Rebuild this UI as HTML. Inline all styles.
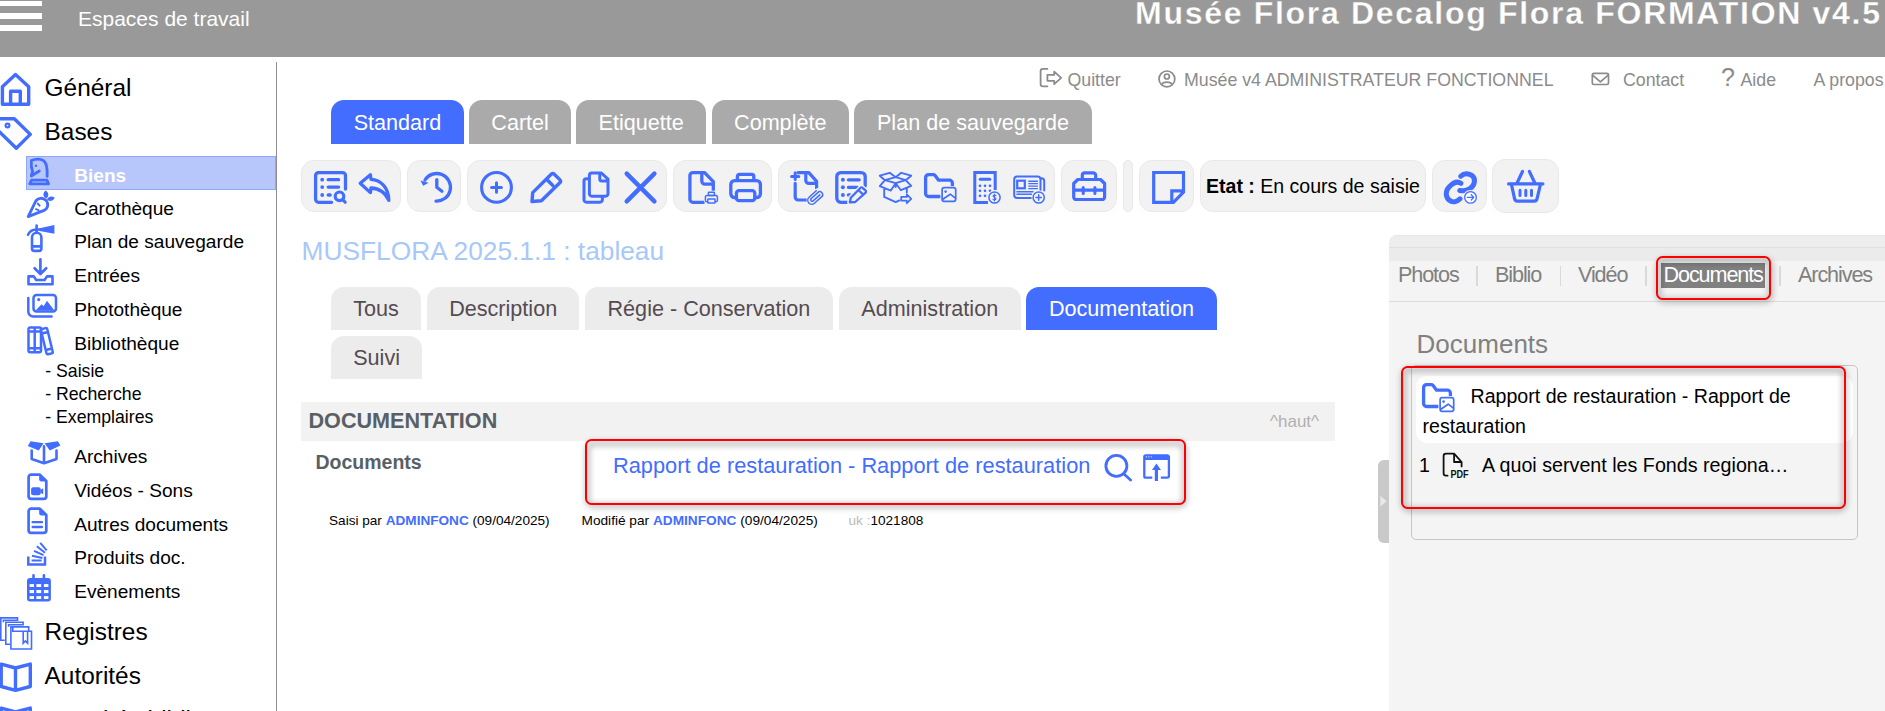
<!DOCTYPE html>
<html lang="fr">
<head>
<meta charset="utf-8">
<title>Musée Flora - Biens</title>
<style>
html,body{margin:0;padding:0;}
body{width:1885px;height:711px;overflow:hidden;background:#fff;position:relative;font-family:"Liberation Sans",sans-serif;color:#000;}
.abs{position:absolute;white-space:nowrap;}
svg{position:absolute;overflow:visible;}
.ic{fill:none;stroke:#426dff;stroke-width:2.4;stroke-linecap:round;stroke-linejoin:round;}
.icf{fill:#426dff;stroke:none;}
/* header */
#hdr{position:absolute;left:0;top:0;width:1885px;height:56.5px;background:#999;}
.bar{position:absolute;left:0;width:42px;height:5.4px;background:#fff;}
#ws{left:78px;top:7px;font-size:21px;line-height:24px;color:#fff;}
#title{right:3.3px;top:-7px;font-size:32px;line-height:40px;font-weight:700;color:#fff;letter-spacing:1.7px;-webkit-text-stroke:0.3px #999;}
/* sidebar */
#sideline{position:absolute;left:276px;top:62px;width:1px;height:649px;background:#8e8e8e;z-index:5;}
.m1{left:44.6px;font-size:24.4px;line-height:28px;}
.m2{left:74.2px;font-size:19.1px;line-height:22px;}
.m3{left:45.2px;font-size:17.7px;line-height:20px;}
#sel{position:absolute;left:26px;top:156px;width:248px;height:32px;background:#b7c7fc;border:1px solid #8fa7fa;}
/* top links */
.tl{font-size:17.75px;line-height:20px;color:#8b8b8b;}
/* tabs */
.tab{position:absolute;top:100px;height:44px;border-radius:13px 13px 0 0;background:#aaa;color:#fff;font-size:21.6px;line-height:45.5px;text-align:center;white-space:nowrap;}
.tab.on{background:#426dff;}
.tab2{position:absolute;height:42.5px;border-radius:13px 13px 0 0;background:#ececec;color:#564b51;font-size:21.6px;line-height:44px;text-align:center;white-space:nowrap;}
.tab2.on{background:#426dff;color:#fff;}
/* toolbar */
.grp{position:absolute;top:159.8px;height:52px;background:#f2f2f2;border:1px solid #e9e9e9;border-radius:13px;box-sizing:border-box;}
/* content */
#rtitle{left:301.6px;top:236px;font-size:26.3px;line-height:30px;color:#a7c8fa;}
#sect{position:absolute;left:301px;top:402px;width:1034px;height:39px;background:#f2f2f2;}
.redbox{position:absolute;border:2.2px solid #f00;border-radius:6.5px;box-sizing:border-box;}
.rbsh{position:absolute;border:3px solid rgba(0,0,0,.42);border-radius:7px;box-sizing:border-box;filter:blur(3.2px);}
.foot{font-size:13.6px;line-height:16px;color:#000;}
.foot b{color:#426dff;}
/* right panel */
#rp{position:absolute;left:1389px;top:235.2px;width:496px;height:476px;background:#f4f4f4;border-radius:8px 0 0 0;overflow:hidden;}
.rt{font-size:21.6px;line-height:25px;letter-spacing:-1.1px;color:#808080;}
.sep{position:absolute;top:266px;width:1.5px;height:20px;background:#d9d9d9;}
</style>
</head>
<body>

<!-- ================= HEADER ================= -->
<div id="hdr">
  <div class="bar" style="top:1px"></div>
  <div class="bar" style="top:13.2px"></div>
  <div class="bar" style="top:25.4px"></div>
  <div id="ws" class="abs">Espaces de travail</div>
  <div id="title" class="abs">Musée Flora Decalog Flora FORMATION v4.5</div>
</div>

<!-- ================= SIDEBAR ================= -->
<div id="sideline"></div>
<div id="sel"></div>
<div class="abs m1" style="top:73.9px">Général</div>
<div class="abs m1" style="top:117.9px">Bases</div>
<div class="abs m2" style="top:165px;color:#fff;font-weight:700">Biens</div>
<div class="abs m2" style="top:197.8px">Carothèque</div>
<div class="abs m2" style="top:231px">Plan de sauvegarde</div>
<div class="abs m2" style="top:264.8px">Entrées</div>
<div class="abs m2" style="top:298.5px">Photothèque</div>
<div class="abs m2" style="top:332.5px">Bibliothèque</div>
<div class="abs m3" style="top:361.2px">- Saisie</div>
<div class="abs m3" style="top:384.2px">- Recherche</div>
<div class="abs m3" style="top:407px">- Exemplaires</div>
<div class="abs m2" style="top:445.5px">Archives</div>
<div class="abs m2" style="top:479.5px">Vidéos - Sons</div>
<div class="abs m2" style="top:513.5px">Autres documents</div>
<div class="abs m2" style="top:546.5px">Produits doc.</div>
<div class="abs m2" style="top:580.5px">Evènements</div>
<div class="abs m1" style="top:618px">Registres</div>
<div class="abs m1" style="top:662px">Autorités</div>
<div class="abs m1" style="top:706px">Autorités biblio.</div>
<!--SIDEICONS-START-->
<!-- home -->
<svg style="left:0;top:68px" width="34" height="42" viewBox="0 68 34 42"><path class="ic" style="stroke-width:3.4" d="M2.4,104.2 V86.8 L15.5,74.6 L28.7,86.8 V104.2 Z M10.6,104 V91.2 H20.3 V104"/></svg>
<!-- tag -->
<svg style="left:0;top:114px" width="36" height="40" viewBox="0 114 36 40"><path class="ic" style="stroke-width:3.4" d="M-2,118.7 H14.3 L30.3,134.4 L16.3,148.3 L-2,130.5 Z"/><circle class="ic" style="stroke-width:2.2" cx="7.5" cy="125.5" r="1.9"/></svg>
<!-- chess knight (Biens) -->
<svg style="left:28px;top:158px" width="24" height="29" viewBox="0 0 24 29"><path class="ic" style="stroke-width:2.8" d="M3.6,22.1 H18.9 L20.6,25.8 H1.7 Z"/><path class="ic" style="stroke-width:2.8" d="M3.4,2.6 C8,0.4 13.5,0.5 16,3 C18.8,5.8 19.6,10 19.1,18.3 M3.4,2.6 C3,6 3.2,10 4.6,13.4 L3.2,18 L11.3,13"/><circle class="icf" cx="8" cy="7.8" r="1.2"/></svg>
<!-- carrot (Carothèque) -->
<svg style="left:27px;top:191px" width="30" height="29" viewBox="0 0 30 29"><path class="ic" style="stroke-width:2.8" d="M1.2,25.6 L8.6,10.4 C10.5,6.6 16,6.2 19,9.4 C22,12.6 21,17.6 17,19.4 Z"/><path class="ic" style="stroke-width:2" d="M10.8,12.6 L12.6,14.6 M9,18.2 L11.4,19.2"/><path class="icf" d="M19.4,7.6 C15.6,5.6 15.6,2 18.6,-0.4 C21.8,1.8 22.4,5 19.4,7.6 Z M20,8.6 C21.4,5.2 25,4.8 27.8,6.8 C25.8,10.4 22.4,11 20,8.6 Z"/></svg>
<!-- extinguisher (Plan de sauvegarde) -->
<svg style="left:27px;top:224px" width="30" height="30" viewBox="0 0 30 30"><path class="ic" style="stroke-width:2.6" d="M5,13.4 A4.7,4.7 0 0 1 14.4,13.4 V24.6 A2.3,2.3 0 0 1 12.1,26.9 H7.3 A2.3,2.3 0 0 1 5,24.6 Z M5,22.4 H14.4"/><path class="ic" style="stroke-width:2.6" d="M9.6,1.6 V8.4 M13.4,5.5 H9.4 C5.6,5.6 2.4,7.6 1,10.8"/><path class="icf" d="M12.6,4.2 L27.4,1 V9.8 L12.6,6.9 Z"/></svg>
<!-- inbox download (Entrées) -->
<svg style="left:27px;top:258px" width="30" height="30" viewBox="0 0 30 30"><path class="ic" style="stroke-width:2.7" d="M13.4,1.4 V15.6 M7.6,10.2 L13.4,16 L19.2,10.2"/><path class="ic" style="stroke-width:2.6" d="M1.5,18.4 H6.8 L9.2,22 H17.6 L20,18.4 H25.5 V26.2 H1.5 Z"/></svg>
<!-- images (Photothèque) -->
<svg style="left:27px;top:293px" width="33" height="27" viewBox="0 0 33 27"><rect class="ic" style="stroke-width:2.5" x="6.5" y="2" width="22.5" height="16.6" rx="3"/><path class="ic" style="stroke-width:2.5" d="M1.3,5 V18.6 A5,5 0 0 0 6.3,23.6 H24.6"/><path class="icf" d="M8.6,17.6 L14.6,11.2 L16.6,13.2 L20,7.8 L27.4,17.6 Z"/><circle class="icf" cx="11.7" cy="6.6" r="1.6"/></svg>
<!-- books (Bibliothèque) -->
<svg style="left:27px;top:326px" width="30" height="30" viewBox="0 0 30 30"><path class="ic" style="stroke-width:2.5" d="M1.5,3 A1.4,1.4 0 0 1 2.9,1.6 H12.6 A1.4,1.4 0 0 1 14,3 V24.8 A1.4,1.4 0 0 1 12.6,26.2 H2.9 A1.4,1.4 0 0 1 1.5,24.8 Z M7.7,1.6 V26.2 M1.5,5.6 H14 M1.5,22.2 H14"/><g transform="translate(-0.6 1) rotate(-13.5 20 14)"><path class="ic" style="stroke-width:2.5" d="M17.2,2.6 A1.3,1.3 0 0 1 18.5,1.3 H22.3 A1.3,1.3 0 0 1 23.6,2.6 V26 A1.3,1.3 0 0 1 22.3,27.3 H18.5 A1.3,1.3 0 0 1 17.2,26 Z M17.2,5.6 H23.6 M17.2,22.6 H23.6"/></g></svg>
<!-- box open (Archives) -->
<svg style="left:27px;top:440px" width="36" height="27" viewBox="0 0 36 27"><path class="icf" d="M3.6,1.2 L16.6,3.2 L11.7,10.6 L0.8,6 Z M30.9,1.2 L33.4,5.6 L22.8,10.6 L17.6,3.2 Z"/><path class="ic" style="stroke-width:2.6" d="M4.7,10.6 V19 L17,23.2 L29.5,19 V10.6 M17,6.4 V23.2"/></svg>
<!-- file video -->
<svg style="left:27px;top:473px" width="23" height="29" viewBox="0 0 23 29"><path class="ic" style="stroke-width:2.7" d="M1.6,4.2 A2.6,2.6 0 0 1 4.2,1.6 H12.8 L19.3,8 V23.2 A2.6,2.6 0 0 1 16.7,25.8 H4.2 A2.6,2.6 0 0 1 1.6,23.2 Z"/><path class="icf" d="M12.2,1.4 L20,8.4 H14 A1.8,1.8 0 0 1 12.2,6.6 Z"/><rect class="icf" x="4.1" y="14.2" width="9.6" height="8" rx="2"/><path class="icf" d="M13.4,17 L16.2,15.2 V21.4 L13.4,19.6 Z"/></svg>
<!-- file lines -->
<svg style="left:27px;top:507px" width="23" height="29" viewBox="0 0 23 29"><path class="ic" style="stroke-width:2.7" d="M1.6,4.2 A2.6,2.6 0 0 1 4.2,1.6 H12.8 L19.3,8 V23.2 A2.6,2.6 0 0 1 16.7,25.8 H4.2 A2.6,2.6 0 0 1 1.6,23.2 Z"/><path class="icf" d="M12.2,1.4 L20,8.4 H14 A1.8,1.8 0 0 1 12.2,6.6 Z"/><path class="ic" style="stroke-width:2.3" d="M5.6,15.2 H15 M5.6,20 H15"/></svg>
<!-- stack (Produits doc.) -->
<svg style="left:27px;top:542px" width="22" height="25" viewBox="0 0 22 25"><path class="ic" style="stroke-width:2.5;stroke-linecap:butt;stroke-linejoin:miter" d="M1.3,14.6 V22.5 H18 V14.6"/><path class="ic" style="stroke-width:2;stroke-linecap:butt" d="M4.6,18.6 H14.6 M5,13.7 L15.4,15.9 M7,8.9 L16.5,13.2 M9.8,4.2 L18,10.8 M13.2,0.8 L19.7,8.4"/></svg>
<!-- calendar -->
<svg style="left:27px;top:574px" width="25" height="29" viewBox="0 0 25 29"><path class="icf" d="M3,3.9 H5.2 V1.2 A1.3,1.3 0 0 1 7.8,1.2 V3.9 H15.6 V1.2 A1.3,1.3 0 0 1 18.2,1.2 V3.9 H20.9 A3,3 0 0 1 23.9,6.9 V24.5 A3,3 0 0 1 20.9,27.5 H3 A3,3 0 0 1 0,24.5 V6.9 A3,3 0 0 1 3,3.9 Z"/><g fill="#fff"><rect x="2.6" y="10.1" width="4.4" height="2.9"/><rect x="9.4" y="10.1" width="4.8" height="2.9"/><rect x="16.9" y="10.1" width="4.5" height="2.9"/><rect x="2.6" y="16" width="4.4" height="3.1"/><rect x="9.4" y="16" width="4.8" height="3.1"/><rect x="16.9" y="16" width="4.5" height="3.1"/><rect x="2.6" y="22.1" width="4.4" height="2.9"/><rect x="9.4" y="22.1" width="4.8" height="2.9"/><rect x="16.9" y="22.1" width="4.5" height="2.9"/></g></svg>
<!-- registres -->
<svg style="left:0;top:617px" width="34" height="35" viewBox="0 0 34 35"><path class="ic" style="stroke-width:1.6;stroke-linejoin:miter;stroke-linecap:butt" d="M4.8,23.3 H0.8 V0.9 H17.5 V3.3 H3.4 V5.2 M10,27.3 H5.8 V5.2 H23.1 V7.7 H8.6 V9.8 M28.7,14.3 V9.9 H10.9 V32 H31.5 V14.3 H12.8 V9.9 M23.2,14.3 V26.2 L25.4,23.9 L27.6,26.2 V14.3"/></svg>
<!-- autorités -->
<svg style="left:0;top:660px" width="34" height="34" viewBox="0 660 34 34"><path class="ic" style="stroke-width:3.4" d="M1.2,664.1 L15.5,668 L30.3,664.1 V686.5 L15.5,690.4 L1.2,686.5 Z M15.5,668 V690.4"/></svg>
<svg style="left:0;top:703.7px" width="34" height="34" viewBox="0 660 34 34"><path class="ic" style="stroke-width:3.4" d="M1.2,664.1 L15.5,668 L30.3,664.1 V686.5 L15.5,690.4 L1.2,686.5 Z M15.5,668 V690.4"/></svg>
<!--SIDEICONS-END-->

<!-- ================= TOP LINKS ================= -->
<div class="abs tl" style="left:1067.5px;top:69.5px">Quitter</div>
<div class="abs tl" style="left:1184px;top:69.5px">Musée v4 ADMINISTRATEUR FONCTIONNEL</div>
<div class="abs tl" style="left:1623px;top:69.5px">Contact</div>
<div class="abs tl" style="left:1721px;top:63px;font-size:25px;line-height:28px">?</div>
<div class="abs tl" style="left:1740.5px;top:69.5px">Aide</div>
<div class="abs tl" style="left:1813.5px;top:69.5px">A propos</div>
<!--TOPICONS-START-->
<!-- quit icon -->
<svg style="left:1039px;top:67px" width="24" height="22" viewBox="1039 67 24 22"><path fill="none" stroke="#8b8b8b" stroke-width="1.8" stroke-linecap="round" stroke-linejoin="round" d="M1047.4,68.9 H1043 A2.4,2.4 0 0 0 1040.6,71.3 V83.9 A2.4,2.4 0 0 0 1043,86.3 H1047.4 M1047.4,74.9 H1054.2 V71.6 L1061.2,77.8 L1054.2,84.1 V80.8 H1047.4 Z"/></svg>
<!-- user icon -->
<svg style="left:1157px;top:69px" width="20" height="20" viewBox="1157 69 20 20"><g fill="none" stroke="#8b8b8b" stroke-width="1.7" stroke-linecap="round"><circle cx="1166.9" cy="78.9" r="7.9"/><circle cx="1166.9" cy="76.5" r="2.5"/><path d="M1161.7,84.6 C1163,81.4 1170.8,81.4 1172.1,84.6"/></g></svg>
<!-- mail icon -->
<svg style="left:1590px;top:71px" width="22" height="16" viewBox="1590 71 22 16"><g fill="none" stroke="#8b8b8b" stroke-width="1.7" stroke-linecap="round" stroke-linejoin="round"><rect x="1592.3" y="73.4" width="16.2" height="11.1" rx="1.6"/><path d="M1592.6,75.2 L1600.4,81.9 L1608.2,75.2"/></g></svg>
<!--TOPICONS-END-->

<!-- ================= VIEW TABS ================= -->
<div class="tab on" style="left:331px;width:133px">Standard</div>
<div class="tab" style="left:469.2px;width:101.8px">Cartel</div>
<div class="tab" style="left:576.2px;width:130px">Etiquette</div>
<div class="tab" style="left:712px;width:136.5px">Complète</div>
<div class="tab" style="left:854px;width:238px">Plan de sauvegarde</div>

<!-- ================= TOOLBAR ================= -->
<div class="grp" style="left:301px;width:100px"></div>
<div class="grp" style="left:407px;width:54px"></div>
<div class="grp" style="left:467px;width:200px"></div>
<div class="grp" style="left:673px;width:99px"></div>
<div class="grp" style="left:778px;width:277px"></div>
<div class="grp" style="left:1061px;width:56px"></div>
<div class="grp" style="left:1123px;width:10px;border-radius:5px"></div>
<div class="grp" style="left:1139px;width:55px"></div>
<div class="grp" style="left:1200px;width:226px"></div>
<div class="abs" style="left:1206px;top:175px;font-size:19.55px;line-height:22px"><b>Etat :</b> En cours de saisie</div>
<div class="grp" style="left:1432px;width:54.5px;top:160px;height:52px"></div>
<div class="grp" style="left:1492px;width:67px;top:158.7px;height:54px"></div>
<!--TOOLICONS-START-->
<!-- 1 list-search -->
<svg style="left:314px;top:171px" width="34" height="34" viewBox="0 0 34 34"><path class="ic" style="stroke-width:3.3" d="M31.5,18 V4.6 A3,3 0 0 0 28.5,1.6 H4.6 A3,3 0 0 0 1.6,4.6 V28.3 A3,3 0 0 0 4.6,31.3 H17.6 M14.2,8.7 H24.6 M14.2,16.1 H24.6 M14.2,24 H16.2"/><circle class="icf" cx="8.2" cy="8.7" r="1.9"/><circle class="icf" cx="8.2" cy="16.1" r="1.9"/><circle class="icf" cx="8.2" cy="24" r="1.9"/><circle class="ic" style="stroke-width:3.2" cx="25.5" cy="25.3" r="4.3"/><path class="ic" style="stroke-width:3.2" d="M28.8,28.8 L31.2,31.2"/></svg>
<!-- 2 reply -->
<svg style="left:358px;top:171px" width="34" height="34" viewBox="0 0 34 34"><path class="ic" style="stroke-width:3.3" d="M2.2,12.3 L12.4,3.8 L13,8.4 C22.5,9 30.6,16 30.8,29.4 C27.4,21.6 21.4,17.4 13,17 L12.4,21.6 Z"/></svg>
<!-- 3 history -->
<svg style="left:419px;top:171px" width="34" height="34" viewBox="0 0 34 34"><path class="ic" style="stroke-width:3.3" d="M17,30.1 A13.8,13.8 0 1 0 6,9 M17.8,8.6 V16.3 L22.9,20.2"/><path class="icf" stroke="#426dff" stroke-width="2.2" stroke-linejoin="round" d="M1.4,9.4 L9.6,11.8 L4.2,14.8 Z"/></svg>
<!-- 4 plus-circle -->
<svg style="left:480px;top:171px" width="34" height="34" viewBox="0 0 34 34"><circle class="ic" style="stroke-width:3.1" cx="16.5" cy="16.4" r="14.9"/><path class="ic" style="stroke-width:3" d="M11.6,16.5 H21.4 M16.5,11.8 V21.2"/></svg>
<!-- 5 pencil -->
<svg style="left:530px;top:171px" width="34" height="34" viewBox="0 0 34 34"><path class="ic" style="stroke-width:3.4" d="M2,30.5 L2.7,21.6 L21.2,3.2 A2.2,2.2 0 0 1 24.3,3.2 L29.8,8.6 A2.2,2.2 0 0 1 29.8,11.7 L11.4,29.8 Z M17.1,8.8 L22.8,14.5"/></svg>
<!-- 6 copy -->
<svg style="left:582px;top:171px" width="30" height="34" viewBox="0 0 30 34"><path class="ic" style="stroke-width:3" d="M7.4,4.4 A2.4,2.4 0 0 1 9.8,2 H19.4 L26,8.2 V22.8 A2.4,2.4 0 0 1 23.6,25.2 H9.8 A2.4,2.4 0 0 1 7.4,22.8 Z M17.8,2.8 V8 A2,2 0 0 0 19.8,10 H25.6"/><path class="ic" style="stroke-width:3" d="M6.4,7.7 H4.4 A2.4,2.4 0 0 0 2,10.1 V28.8 A2.4,2.4 0 0 0 4.4,31.2 H18 A2.4,2.4 0 0 0 20.4,28.8 V26.6"/></svg>
<!-- 7 X -->
<svg style="left:624px;top:171px" width="34" height="34" viewBox="0 0 34 34"><path class="ic" style="stroke-width:4.4" d="M2.7,2.6 L30.4,30.4 M30.4,2.6 L2.7,30.4"/></svg>
<!-- 8 file-print -->
<svg style="left:688px;top:171px" width="32" height="34" viewBox="0 0 32 34"><path class="ic" style="stroke-width:3.3" d="M15.4,31.3 H4.9 A3,3 0 0 1 1.9,28.3 V4.6 A3,3 0 0 1 4.9,1.6 H16.6 L25.3,10.6 V19.4 M13.8,2.4 V10 A3.2,3.2 0 0 0 17,13.2 H25"/><g stroke="#f2f2f2" stroke-width="3" fill="#f2f2f2"><rect x="17.4" y="24.4" width="12" height="6.4" rx="1.6"/><rect x="20.4" y="21.2" width="6" height="3.4"/><rect x="19.8" y="28" width="7.2" height="4"/></g><g class="ic" style="stroke-width:1.5"><rect x="17.4" y="24.4" width="12" height="6.4" rx="1.6"/><rect x="20.4" y="21.2" width="6" height="3.2" rx=".6"/><rect x="19.8" y="28" width="7.2" height="4" rx=".6" fill="#f2f2f2"/></g></svg>
<!-- 9 printer -->
<svg style="left:729px;top:171px" width="34" height="34" viewBox="0 0 34 34"><path class="ic" style="stroke-width:3.3" d="M7.4,26.6 H5.6 A3.8,3.8 0 0 1 1.8,22.8 V13.4 A3.8,3.8 0 0 1 5.6,9.6 H27.6 A3.8,3.8 0 0 1 31.4,13.4 V22.8 A3.8,3.8 0 0 1 27.6,26.6 H25.8 M8.4,9.6 V5.4 A2,2 0 0 1 10.4,3.4 H22.8 A2,2 0 0 1 24.8,5.4 V9.6"/><rect class="ic" style="stroke-width:3.3" x="7.4" y="19.6" width="18.4" height="10" rx="2.6"/></svg>
<!-- a file-plus-clip -->
<svg style="left:791px;top:171px" width="34" height="34" viewBox="0 0 34 34"><path class="ic" style="stroke-width:3" d="M0.6,5.5 H7.8 M4.2,1.8 V8.6"/><path class="ic" style="stroke-width:3.2" d="M4.2,12.4 V26 A3,3 0 0 0 7.2,29 H16.4 M7,1.6 H17.8 L25.6,10.4 V17.2 M14.8,2.4 V9.4 A3,3 0 0 0 17.8,12.4 H25.4"/><g transform="rotate(-42 24.8 25.6)"><rect x="15.4" y="21.2" width="18.8" height="8.8" rx="4.4" fill="#f2f2f2" stroke="#f2f2f2" stroke-width="2.4"/><path class="ic" style="stroke-width:1.5" d="M19.4,24 H30.4 A3.3,3.3 0 0 1 30.4,29.6 H19.4 A4,4 0 0 1 19.4,21.6 H29 M29,27 H20 A1.4,1.4 0 0 1 20,24.2"/></g></svg>
<!-- b list-edit -->
<svg style="left:835px;top:171px" width="34" height="34" viewBox="0 0 34 34"><path class="ic" style="stroke-width:3.3" d="M30.2,15 V5.6 A4,4 0 0 0 26.2,1.6 H5.8 A4,4 0 0 0 1.8,5.6 V27.3 A4,4 0 0 0 5.8,31.3 H12.6 M13.4,8.8 H24.2 M13.4,16.3 H22.4 M13.4,24 H15"/><circle class="icf" cx="7.9" cy="8.8" r="2"/><circle class="icf" cx="7.9" cy="16.3" r="2"/><circle class="icf" cx="7.9" cy="24" r="2"/><path d="M14.6,31.5 L15.7,26.7 L26.5,15.9 L31.3,20.4 L20.2,31.1 Z" fill="#f2f2f2" stroke="#f2f2f2" stroke-width="5" stroke-linejoin="round"/><path class="ic" style="stroke-width:2.3" d="M14.8,31.4 L15.8,26.8 L25.6,16.8 A1.4,1.4 0 0 1 27.6,16.8 L30.6,19.6 A1.4,1.4 0 0 1 30.6,21.6 L20.2,31 Z M23.4,19 L28.2,23.6"/></svg>
<!-- c box arrow -->
<svg style="left:879px;top:171px" width="34" height="34" viewBox="0 0 34 34"><path class="ic" style="stroke-width:1.9" d="M0.8,4.7 L10.7,1.8 L16.7,6.2 L5.9,9.2 Z M16.7,6.2 L22.2,1.8 L32.2,4.7 L26.7,9.2 Z M5.9,9.2 L16.7,12.2 L26.7,9.2 M5.9,9.2 L0.8,15.1 L11.8,19.6 L16.7,12.2 L21.9,19.2 L32.2,14.8 L26.7,9.2 M5.2,17.2 V25.9 L16.7,31.1 L20.4,29.4 M27.8,17 V21.6 M16.7,12.6 V16"/><path class="ic" style="stroke-width:1.8" d="M22.2,25.9 H27.8 V23.4 L32.2,27.8 L27.8,32.2 V29.6 H22.2 Z"/></svg>
<!-- d folder-image -->
<svg style="left:924px;top:171px" width="34" height="34" viewBox="0 0 34 34"><path class="ic" style="stroke-width:3.3" d="M16.4,25.5 H4.6 A3,3 0 0 1 1.6,22.5 V6.6 A3,3 0 0 1 4.6,3.6 H9.4 A2,2 0 0 1 10.9,4.3 L14.6,9.2 H25.4 A3,3 0 0 1 28.4,12.2 V14.6"/><rect x="18.1" y="16.6" width="13.6" height="13.8" rx="2.2" fill="#f2f2f2" stroke="#f2f2f2" stroke-width="3.4"/><rect class="ic" style="stroke-width:1.7" x="18.1" y="16.6" width="13.6" height="13.8" rx="2.2"/><path class="ic" style="stroke-width:1.7" d="M18.8,28.2 L26.2,23.2 L31.4,27.2"/><circle class="icf" cx="21.6" cy="20.6" r="1.3"/></svg>
<!-- e calculator -->
<svg style="left:973px;top:171px" width="30" height="34" viewBox="0 0 30 34"><path class="ic" style="stroke-width:3;stroke-linejoin:miter;stroke-linecap:butt" d="M22.2,19 V1.5 H1.8 V31.4 H15"/><path class="ic" style="stroke-width:3" d="M7.2,8.2 H16.8"/><g class="icf"><circle cx="7" cy="14.8" r="1.35"/><circle cx="12" cy="14.8" r="1.35"/><circle cx="17" cy="14.8" r="1.35"/><circle cx="7" cy="19.8" r="1.35"/><circle cx="12" cy="19.8" r="1.35"/><circle cx="17" cy="19.8" r="1.35"/><circle cx="7" cy="24.8" r="1.35"/><circle cx="12" cy="24.8" r="1.35"/></g><circle cx="21.5" cy="26.5" r="6" fill="#f2f2f2" stroke="#f2f2f2" stroke-width="2.6"/><circle class="ic" style="stroke-width:1.5" cx="21.5" cy="26.5" r="5.6"/><path class="ic" style="stroke-width:1.1" d="M23,24.6 C22,23.6 20,24 20.1,25.3 C20.2,26.8 23,26.2 23,27.8 C23,29 21,29.4 20,28.3 M21.5,23 V30"/></svg>
<!-- f newspaper-plus -->
<svg style="left:1013px;top:171px" width="34" height="34" viewBox="0 0 34 34"><path class="ic" style="stroke-width:2" d="M27.5,19.6 V8.5 A3,3 0 0 0 24.5,5.5 H4.2 A3,3 0 0 0 1.2,8.5 V24 A3,3 0 0 0 4.2,27 H18.6 M28.3,7.3 C30.2,7.4 31.2,8.4 31.2,10 V19.6"/><rect class="ic" style="stroke-width:2.2;stroke-linejoin:miter" x="4.2" y="9.7" width="7.6" height="7.6"/><path class="ic" style="stroke-width:1.4;stroke-linecap:butt" d="M15.3,10.2 H24.9 M15.3,12.6 H24.9 M15.3,15.1 H24.9 M15.3,17.6 H24.9 M3.4,20.7 H20.4 M3.4,23.3 H19"/><circle cx="25.7" cy="26.5" r="6" fill="#f2f2f2" stroke="#f2f2f2" stroke-width="2.6"/><circle class="ic" style="stroke-width:1.5" cx="25.7" cy="26.5" r="5.6"/><path class="ic" style="stroke-width:1.5" d="M22.9,26.5 H28.5 M25.7,23.7 V29.3"/></svg>
<!-- toolbox -->
<svg style="left:1072px;top:171px" width="36" height="32" viewBox="0 0 36 32"><path class="ic" style="stroke-width:3.2" d="M5.8,8.5 H28.5 L32.6,12.5 V26 A2.5,2.5 0 0 1 30.1,28.5 H4.2 A2.5,2.5 0 0 1 1.7,26 V12.5 Z M10.3,8.5 V4.3 A2.5,2.5 0 0 1 12.8,1.8 H21.2 A2.5,2.5 0 0 1 23.7,4.3 V8.5 M1.7,19.2 H32.6"/><path class="ic" style="stroke-width:3" d="M11.2,16.4 V22.4 M22.9,16.4 V22.4"/></svg>
<!-- note -->
<svg style="left:1152px;top:171px" width="34" height="34" viewBox="0 0 34 34"><path class="ic" style="stroke-width:3.2;stroke-linejoin:miter;stroke-linecap:butt" d="M1.7,1.5 H31.5 V21 L21.4,31.4 H1.7 Z M19.8,31.4 V19.8 H31.5"/></svg>
<!-- link -->
<svg style="left:1444px;top:171px" width="36" height="36" viewBox="0 0 36 36"><path class="ic" style="stroke-width:5" d="M16.7,5.2 C21.5,0.5 31.2,3 30.4,10.7 C29.8,16 24,21 15.8,19.5 M16.9,12.3 C13,9.6 9.5,11.5 5.5,15.5 C1,20 1.5,26 5,29 C8.5,32 13,31 16.1,27.8"/><circle cx="26.5" cy="26.4" r="6.2" fill="#fff" stroke="#f2f2f2" stroke-width="2.6"/><circle class="ic" style="stroke-width:1.3;fill:#fff" cx="26.5" cy="26.4" r="5.8"/><path class="ic" style="stroke-width:1.3" d="M23.4,26.4 H29.6 M27.2,23.8 L29.8,26.4 L27.2,29"/></svg>
<!-- basket -->
<svg style="left:1507px;top:170px" width="38" height="34" viewBox="0 0 38 34"><path class="ic" style="stroke-width:3.2" d="M1.6,13.9 H35.9 M4.6,15.2 L7.6,28.8 A3,3 0 0 0 10.5,31.1 H27.1 A3,3 0 0 0 30,28.8 L33.3,15.2 M15.5,1.5 L10.2,12.7 M22.4,1.5 L27.7,12.7"/><path class="ic" style="stroke-width:3" d="M13,20.2 V25.6 M18.8,20.2 V25.6 M24.5,20.2 V25.6"/></svg>
<!--TOOLICONS-END-->

<!-- ================= RECORD ================= -->
<div id="rtitle" class="abs">MUSFLORA 2025.1.1 : tableau</div>
<div class="tab2" style="left:331.2px;top:287px;width:89.8px">Tous</div>
<div class="tab2" style="left:427.2px;top:287px;width:152px">Description</div>
<div class="tab2" style="left:585.2px;top:287px;width:247.5px">Régie - Conservation</div>
<div class="tab2" style="left:839px;top:287px;width:181.5px">Administration</div>
<div class="tab2 on" style="left:1026px;top:287px;width:191px">Documentation</div>
<div class="tab2" style="left:331.2px;top:336.2px;width:90.8px">Suivi</div>

<div id="sect"></div>
<div class="abs" style="left:308.5px;top:408px;font-size:21.6px;line-height:25px;font-weight:700;color:#586066">DOCUMENTATION</div>
<div class="abs" style="left:1270px;top:411.5px;font-size:17px;line-height:20px;color:#b0b0b0">^haut^</div>
<div class="abs" style="left:315.5px;top:451px;font-size:19.5px;line-height:22px;font-weight:700;color:#586066">Documents</div>
<div class="rbsh" style="left:586.4px;top:441.5px;width:600px;height:65px"></div>
<div class="redbox" style="left:585.2px;top:439.4px;width:600.8px;height:65.2px"></div>
<div class="abs" style="left:613px;top:452.5px;font-size:21.8px;line-height:25px;color:#426dff">Rapport de restauration - Rapport de restauration</div>
<div class="abs foot" style="left:329px;top:513px">Saisi par <b>ADMINFONC</b> (09/04/2025)</div>
<div class="abs foot" style="left:581.5px;top:513px;font-size:13.68px">Modifié par <b>ADMINFONC</b> (09/04/2025)</div>
<div class="abs foot" style="left:848.5px;top:513px"><span style="color:#bbb">uk :</span>1021808</div>
<!--MAINICONS-START-->
<!-- search -->
<svg style="left:1103px;top:452px" width="30" height="30" viewBox="1103 452 30 30"><circle class="ic" style="stroke-width:2.8" cx="1116.4" cy="465.9" r="10.5"/><path class="ic" style="stroke-width:2.8" d="M1124.2,474.2 L1130.6,480"/></svg>
<!-- upload window -->
<svg style="left:1142px;top:453px" width="30" height="30" viewBox="1142 453 30 30"><path class="ic" style="stroke-width:2.3;stroke-linecap:butt" d="M1152.3,477.7 H1145.8 A1.5,1.5 0 0 1 1144.3,476.2 V457 A1.5,1.5 0 0 1 1145.8,455.5 H1167.4 A1.5,1.5 0 0 1 1168.9,457 V476.2 A1.5,1.5 0 0 1 1167.4,477.7 H1160.8"/><path class="icf" d="M1144.3,455 H1168.9 V460 H1144.3 Z M1154.8,481.1 V469.9 H1152 L1156.4,463.4 L1161,469.9 H1158 V481.1 Z"/><g fill="#fff"><circle cx="1146.4" cy="456.8" r=".6"/><circle cx="1148.8" cy="456.8" r=".6"/><circle cx="1151.2" cy="456.8" r=".6"/></g></svg>
<!--MAINICONS-END-->

<!-- ================= RIGHT PANEL ================= -->
<div id="handle" style="position:absolute;left:1377.5px;top:460px;width:11.5px;height:83px;background:#c9c9c9;border-radius:6px 0 0 6px"></div>
<div id="rp">
  <div style="position:absolute;left:0;top:0;width:496px;height:12px;background:#ededed;border-top:1px solid #e6e6e6"></div>
  <div style="position:absolute;left:0;top:12px;width:496px;height:1px;background:#e0e0e0"></div>
  <div style="position:absolute;left:0;top:13px;width:496px;height:12.5px;background:#ebebeb"></div>
  <div style="position:absolute;left:0;top:65.5px;width:496px;height:1px;background:#dcdcdc"></div>
</div>
<div class="abs rt" style="left:1398px;top:261.6px">Photos</div>
<div class="sep" style="left:1476.2px"></div>
<div class="abs rt" style="left:1495px;top:261.6px">Biblio</div>
<div class="sep" style="left:1559.7px"></div>
<div class="abs rt" style="left:1578px;top:261.6px">Vidéo</div>
<div class="sep" style="left:1645px"></div>
<div style="position:absolute;left:1661px;top:262.5px;width:104px;height:25px;background:#808080"></div>
<div class="abs rt" style="left:1663.5px;top:261.6px;color:#fff">Documents</div>
<div class="sep" style="left:1779.4px"></div>
<div class="abs rt" style="left:1798px;top:261.6px">Archives</div>
<div class="rbsh" style="left:1656.6px;top:258.6px;width:115px;height:43.5px"></div>
<div class="redbox" style="left:1656px;top:256.4px;width:114.8px;height:43.4px"></div>

<div class="abs" style="left:1416.6px;top:329px;font-size:26px;line-height:30px;color:#808080">Documents</div>
<div style="position:absolute;left:1411px;top:365px;width:446.6px;height:175px;border:1px solid #c6c6c6;border-radius:5px;box-sizing:border-box"></div>
<div style="position:absolute;left:1416px;top:376px;width:437px;height:67px;background:#fff;border-radius:11px"></div>
<div class="abs" style="left:1470.5px;top:385px;font-size:19.6px;line-height:22px">Rapport de restauration - Rapport de</div>
<div class="abs" style="left:1422.5px;top:415px;font-size:19.6px;line-height:22px">restauration</div>
<div class="abs" style="left:1419px;top:454px;font-size:19.6px;line-height:22px">1</div>
<div class="abs" style="left:1482px;top:454px;font-size:19.7px;line-height:22px">A quoi servent les Fonds regiona…</div>
<div class="rbsh" style="left:1402.4px;top:368.4px;width:444px;height:143px"></div>
<div class="redbox" style="left:1401.3px;top:366.2px;width:444.4px;height:143px"></div>
<!--RPICONS-START-->
<!-- handle triangle -->
<svg style="left:1377px;top:490px" width="12" height="22" viewBox="0 0 12 22"><path fill="#e9e9e9" d="M3.4,6 L9.6,11.3 L3.4,16.6 Z"/></svg>
<!-- folder image (panel) -->
<svg style="left:1422px;top:380.6px" width="34" height="34" viewBox="0 0 34 34"><path class="ic" style="stroke-width:3.3" d="M16.4,25.5 H4.6 A3,3 0 0 1 1.6,22.5 V6.6 A3,3 0 0 1 4.6,3.6 H9.4 A2,2 0 0 1 10.9,4.3 L14.6,9.2 H25.4 A3,3 0 0 1 28.4,12.2 V14.6"/><rect x="18.1" y="16.6" width="13.6" height="13.8" rx="2.2" fill="#fff" stroke="#fff" stroke-width="3.4"/><rect class="ic" style="stroke-width:1.7" x="18.1" y="16.6" width="13.6" height="13.8" rx="2.2"/><path class="ic" style="stroke-width:1.7" d="M18.8,28.2 L26.2,23.2 L31.4,27.2"/><circle class="icf" cx="21.6" cy="20.6" r="1.3"/></svg>
<!-- pdf icon -->
<svg style="left:1442px;top:452px" width="28" height="28" viewBox="1442 452 28 28"><path fill="none" stroke="#111" stroke-width="1.8" stroke-linecap="round" stroke-linejoin="round" d="M1447.6,475.7 H1446 A2.4,2.4 0 0 1 1443.6,473.3 V456 A2.4,2.4 0 0 1 1446,453.6 H1454.1 L1461.6,462 V466.4 M1454.1,454 V462 H1461.4"/><text x="1450.4" y="478" font-family="Liberation Sans, sans-serif" font-size="10.4" font-weight="700" fill="#111" textLength="18.2" lengthAdjust="spacingAndGlyphs">PDF</text></svg>
<!--RPICONS-END-->

</body>
</html>
